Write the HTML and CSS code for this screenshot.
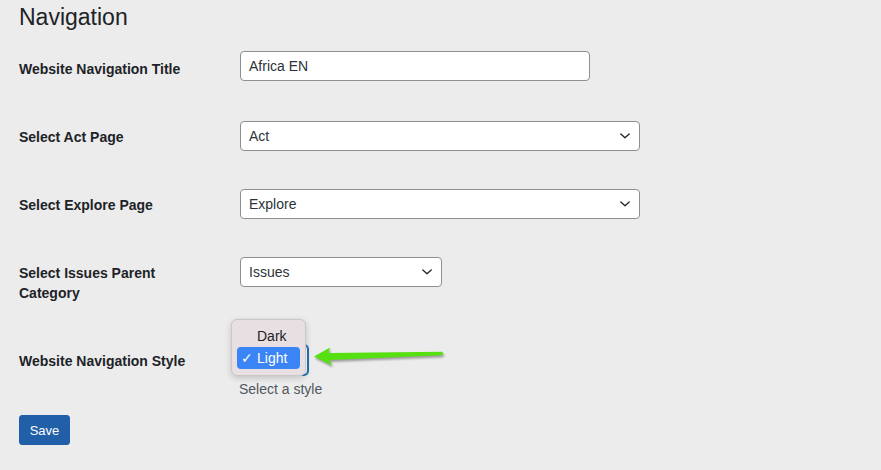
FILE: index.html
```html
<!DOCTYPE html>
<html>
<head>
  <link rel="stylesheet" href="styles.css">
  <title>Navigation</title>
</head>
<body>
  <div class="wrap">
    <h1 class="page-title">Navigation</h1>
    <table class="form-table">
      <tr class="row-first">
        <th><label>Website Navigation Title</label></th>
        <td><div class="text-input wide">Africa EN</div></td>
      </tr>
      <tr>
        <th><label>Select Act Page</label></th>
        <td>
          <div class="select full">
            <span>Act</span>
            <svg class="chev" width="12" height="8" viewBox="0 0 12 8"><path d="M1.8 2 L6 5.8 L10.2 2" fill="none" stroke="#1d2327" stroke-width="1.3" stroke-linecap="round" stroke-linejoin="round"/></svg>
          </div>
        </td>
      </tr>
      <tr>
        <th><label>Select Explore Page</label></th>
        <td>
          <div class="select full">
            <span>Explore</span>
            <svg class="chev" width="12" height="8" viewBox="0 0 12 8"><path d="M1.8 2 L6 5.8 L10.2 2" fill="none" stroke="#1d2327" stroke-width="1.3" stroke-linecap="round" stroke-linejoin="round"/></svg>
          </div>
        </td>
      </tr>
      <tr>
        <th><label>Select Issues Parent Category</label></th>
        <td>
          <div class="select half">
            <span>Issues</span>
            <svg class="chev" width="12" height="8" viewBox="0 0 12 8"><path d="M1.8 2 L6 5.8 L10.2 2" fill="none" stroke="#1d2327" stroke-width="1.3" stroke-linecap="round" stroke-linejoin="round"/></svg>
          </div>
        </td>
      </tr>
      <tr>
        <th><label>Website Navigation Style</label></th>
        <td>
          <div class="style-field">
            <div class="select small focused"></div>
            <div class="menu">
              <div class="menu-item">Dark</div>
              <div class="menu-item active"><span class="tick">&#10003;</span>Light</div>
            </div>
            <svg class="pointer" width="140" height="30" viewBox="0 0 140 30">
              <polygon points="5,16.5 21,7.5 19.5,13 133,11.8 134.5,13.5 133,15.2 20.5,20 23,25.5" fill="#57e00f"/>
            </svg>
          </div>
          <p class="description">Select a style</p>
        </td>
      </tr>
    </table>
    <button class="button-primary">Save</button>
  </div>
</body>
</html>
```

FILE: styles.css
```css
body {
  margin: 0;
  background: #ececec;
  color: #1d2327;
  font-family: "Liberation Sans", Arial, sans-serif;
  font-size: 14px;
}

.wrap {
  padding: 0 19px;
}

.page-title {
  font-size: 23px;
  font-weight: 400;
  line-height: 30px;
  margin: 2px 0 0;
}

.form-table {
  border-collapse: collapse;
  border-spacing: 0;
  margin-top: 4px;
}

.form-table th {
  width: 200px;
  padding: 21px 10px 27px 0;
  text-align: left;
  vertical-align: top;
  font-weight: 700;
  line-height: 20px;
}

.form-table th label {
  display: block;
  max-width: 195px;
}

.form-table td {
  padding: 15px 10px 23px;
  vertical-align: top;
}

.row-first th {
  padding-top: 23px;
}

.row-first td {
  padding-bottom: 25px;
}

.text-input,
.select {
  box-sizing: border-box;
  height: 30px;
  margin: 0 1px;
  padding: 0 8px;
  background: #fff;
  border: 1px solid #8c8f94;
  border-radius: 4px;
  color: #2c3338;
  line-height: 28px;
}

.select {
  display: flex;
  align-items: center;
  justify-content: space-between;
}

.wide { width: 350px; }
.full { width: 400px; }
.half { width: 202px; }
.small { width: 68px; }

.select.focused {
  border-color: #2271b1;
  box-shadow: 0 0 0 1px #2271b1;
}

.style-field {
  position: relative;
}

.menu {
  position: absolute;
  left: -8px;
  top: -26px;
  width: 75px;
  height: 57px;
  box-sizing: border-box;
  padding: 5px 5px 6px;
  background: #e8dfe2;
  border: 1px solid #cdc6c9;
  border-radius: 6px;
  box-shadow: 0 2px 6px rgba(0, 0, 0, 0.18);
}

.menu-item {
  height: 22px;
  line-height: 22px;
  padding-left: 20px;
  color: #222;
}

.menu-item.active {
  position: relative;
  background: #3b84f5;
  color: #fff;
  border-radius: 4px;
}

.tick {
  position: absolute;
  left: 4px;
  font-size: 14px;
}

.pointer {
  position: absolute;
  left: 70px;
  top: -5px;
  filter: drop-shadow(1px 2px 1px rgba(0, 0, 0, 0.35));
}

.description {
  margin: 5px 0 0;
  color: #50575e;
  font-size: 14px;
  line-height: 18px;
}

.form-table tr:last-child td {
  padding-bottom: 15px;
}

.button-primary {
  margin-top: 2px;
  height: 30px;
  width: 51px;
  padding: 0;
  background: #2160a8;
  border: 1px solid #2160a8;
  border-radius: 3px;
  color: #fff;
  font-family: "Liberation Sans", Arial, sans-serif;
  font-size: 13px;
  font-weight: 500;
}
```
